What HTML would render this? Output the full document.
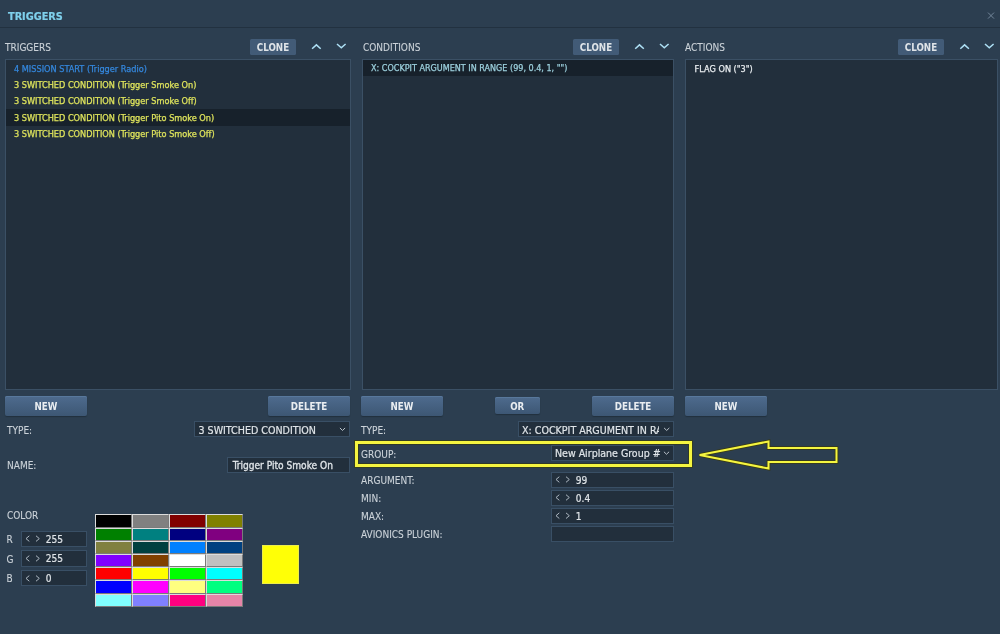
<!DOCTYPE html>
<html><head><meta charset="utf-8"><title>Triggers</title>
<style>
html,body{margin:0;padding:0;}
html{background:#2c3e50;}
body{width:1000px;height:634px;overflow:hidden;position:relative;will-change:transform;
 font-family:"DejaVu Sans Condensed","DejaVu Sans","Liberation Sans",sans-serif;font-stretch:condensed;font-size:10px;color:#d5dbe0;-webkit-text-stroke:0.2px;}
.a{position:absolute;white-space:nowrap;}
.title{left:8px;top:8.7px;font-weight:bold;font-size:10.8px;color:#7fd0ec;line-height:16px;}
.sep{left:0;top:27px;width:1000px;height:1px;background:#223140;}
.lbl{-webkit-text-stroke:0.1px;font-size:10px;line-height:14px;color:#ccd3d9;}
.list{background:#222f3c;border:1px solid #3b5065;box-sizing:border-box;}
.btn{color:#e9edf1;font-weight:bold;font-size:9.7px;text-align:center;box-sizing:border-box;border-radius:2px;background:linear-gradient(#4e6b8e,#3d5774);box-shadow:inset 0 1px 0 #58789c,0 1px 1px rgba(20,30,40,0.45);-webkit-text-stroke:0;}
.clone{height:16.5px;line-height:17.5px;width:46px;top:38.5px;font-size:9.7px;background:#425b77;box-shadow:none;border-radius:1.5px;color:#dfe4e8;}
.big{height:19.5px;line-height:21px;top:396px;width:82px;}
.row{font-size:9.1px;-webkit-text-stroke:0.25px;line-height:16px;height:16px;}
.inp{background:#222f3c;border:1px solid #394f65;box-sizing:border-box;}
.val{font-size:10.6px;line-height:14px;color:#dfe4e8;}
.cell{box-sizing:border-box;border-left:1px solid #dcdcdc;border-top:1px solid #dcdcdc;border-right:1px solid #7a7a7a;border-bottom:1px solid #7a7a7a;}
</style></head><body>
<div class="a title">TRIGGERS</div>
<div class="a sep"></div>


<div class="a lbl" style="left:5px;top:41px;">TRIGGERS</div>
<div class="a lbl" style="left:363px;top:41px;">CONDITIONS</div>
<div class="a lbl" style="left:685px;top:41px;">ACTIONS</div>

<div class="a btn clone" style="left:250px;">CLONE</div>
<div class="a btn clone" style="left:573px;">CLONE</div>
<div class="a btn clone" style="left:898px;">CLONE</div>


<div class="a list" style="left:5px;top:59px;width:345.5px;height:331.4px;"></div>
<div class="a list" style="left:362.4px;top:59px;width:311.6px;height:331.4px;"></div>
<div class="a list" style="left:685.2px;top:59px;width:312.5px;height:331.4px;"></div>

<div class="a row" style="left:14px;top:61px;color:#3487dd;">4 MISSION START (Trigger Radio)</div>
<div class="a row" style="left:14px;top:77px;color:#dfe45c;">3 SWITCHED CONDITION (Trigger Smoke On)</div>
<div class="a row" style="left:14px;top:93px;color:#dfe45c;">3 SWITCHED CONDITION (Trigger Smoke Off)</div>
<div class="a" style="left:6px;top:109px;width:343.5px;height:17px;background:#17212b;"></div>
<div class="a row" style="left:14px;top:110px;color:#dfe45c;">3 SWITCHED CONDITION (Trigger Pito Smoke On)</div>
<div class="a row" style="left:14px;top:126px;color:#dfe45c;">3 SWITCHED CONDITION (Trigger Pito Smoke Off)</div>

<div class="a" style="left:363px;top:60px;width:310px;height:16px;background:#17212b;"></div>
<div class="a row" style="left:371px;top:60px;font-size:8.97px;color:#9bcfdc;">X: COCKPIT ARGUMENT IN RANGE (99, 0.4, 1, "")</div>
<div class="a row" style="left:694.6px;top:61px;color:#e8ecef;">FLAG ON ("3")</div>

<div class="a btn big" style="left:5px;">NEW</div>
<div class="a btn big" style="left:268px;">DELETE</div>
<div class="a btn big" style="left:361px;">NEW</div>
<div class="a btn big" style="left:494.5px;width:45.5px;top:397.3px;height:16.5px;line-height:20px;">OR</div>
<div class="a btn big" style="left:592px;">DELETE</div>
<div class="a btn big" style="left:685px;">NEW</div>

<div class="a lbl" style="left:7px;top:424px;">TYPE:</div>
<div class="a inp" style="left:194px;top:421.3px;width:156px;height:16px;"></div>
<div class="a val" style="left:198.5px;top:422.5px;">3 SWITCHED CONDITION</div>

<div class="a lbl" style="left:7px;top:459px;">NAME:</div>
<div class="a inp" style="left:227px;top:457px;width:123px;height:16px;"></div>
<div class="a val" style="left:232.7px;top:459px;font-size:10.1px;-webkit-text-stroke:0.3px;">Trigger Pito Smoke On</div>

<div class="a lbl" style="left:7px;top:509px;">COLOR</div>
<div class="a lbl" style="left:6.5px;top:533px;">R</div>
<div class="a lbl" style="left:6.5px;top:552.5px;">G</div>
<div class="a lbl" style="left:6.5px;top:572px;">B</div>
<div class="a inp" style="left:21px;top:530.5px;width:66px;height:16.2px;"></div>
<div class="a val" style="left:45.8px;top:532.6px;font-size:10.1px;">255</div>
<div class="a inp" style="left:21px;top:550.3px;width:66px;height:16.3px;"></div>
<div class="a val" style="left:45.8px;top:552.4499999999999px;font-size:10.1px;">255</div>
<div class="a inp" style="left:21px;top:570.3px;width:66px;height:16.2px;"></div>
<div class="a val" style="left:45.8px;top:572.4px;font-size:10.1px;">0</div>

<div class="a cell" style="left:94.80px;top:514.40px;width:37.15px;height:13.19px;background:#000000;"></div>
<div class="a cell" style="left:131.95px;top:514.40px;width:37.15px;height:13.19px;background:#808080;"></div>
<div class="a cell" style="left:169.10px;top:514.40px;width:37.15px;height:13.19px;background:#800000;"></div>
<div class="a cell" style="left:206.25px;top:514.40px;width:37.15px;height:13.19px;background:#808000;"></div>
<div class="a cell" style="left:94.80px;top:527.59px;width:37.15px;height:13.19px;background:#008000;"></div>
<div class="a cell" style="left:131.95px;top:527.59px;width:37.15px;height:13.19px;background:#008080;"></div>
<div class="a cell" style="left:169.10px;top:527.59px;width:37.15px;height:13.19px;background:#000080;"></div>
<div class="a cell" style="left:206.25px;top:527.59px;width:37.15px;height:13.19px;background:#800080;"></div>
<div class="a cell" style="left:94.80px;top:540.77px;width:37.15px;height:13.19px;background:#808040;"></div>
<div class="a cell" style="left:131.95px;top:540.77px;width:37.15px;height:13.19px;background:#004040;"></div>
<div class="a cell" style="left:169.10px;top:540.77px;width:37.15px;height:13.19px;background:#0080ff;"></div>
<div class="a cell" style="left:206.25px;top:540.77px;width:37.15px;height:13.19px;background:#004080;"></div>
<div class="a cell" style="left:94.80px;top:553.96px;width:37.15px;height:13.19px;background:#8000ff;"></div>
<div class="a cell" style="left:131.95px;top:553.96px;width:37.15px;height:13.19px;background:#804000;"></div>
<div class="a cell" style="left:169.10px;top:553.96px;width:37.15px;height:13.19px;background:#ffffff;"></div>
<div class="a cell" style="left:206.25px;top:553.96px;width:37.15px;height:13.19px;background:#c0c0c0;"></div>
<div class="a cell" style="left:94.80px;top:567.14px;width:37.15px;height:13.19px;background:#ff0000;"></div>
<div class="a cell" style="left:131.95px;top:567.14px;width:37.15px;height:13.19px;background:#ffff00;"></div>
<div class="a cell" style="left:169.10px;top:567.14px;width:37.15px;height:13.19px;background:#00ff00;"></div>
<div class="a cell" style="left:206.25px;top:567.14px;width:37.15px;height:13.19px;background:#00ffff;"></div>
<div class="a cell" style="left:94.80px;top:580.33px;width:37.15px;height:13.19px;background:#0000ff;"></div>
<div class="a cell" style="left:131.95px;top:580.33px;width:37.15px;height:13.19px;background:#ff00ff;"></div>
<div class="a cell" style="left:169.10px;top:580.33px;width:37.15px;height:13.19px;background:#ffff80;"></div>
<div class="a cell" style="left:206.25px;top:580.33px;width:37.15px;height:13.19px;background:#00ff80;"></div>
<div class="a cell" style="left:94.80px;top:593.51px;width:37.15px;height:13.19px;background:#80ffff;"></div>
<div class="a cell" style="left:131.95px;top:593.51px;width:37.15px;height:13.19px;background:#8080ff;"></div>
<div class="a cell" style="left:169.10px;top:593.51px;width:37.15px;height:13.19px;background:#ff0080;"></div>
<div class="a cell" style="left:206.25px;top:593.51px;width:37.15px;height:13.19px;background:#e684a8;"></div>

<div class="a" style="left:262.3px;top:545px;width:37px;height:39px;background:#ffff06;box-sizing:border-box;border:1px solid #eded4a;"></div>

<div class="a lbl" style="left:361px;top:424px;">TYPE:</div>
<div class="a inp" style="left:518px;top:421.3px;width:156px;height:16px;"></div>
<div class="a val" style="left:522px;top:422.5px;width:137px;overflow:hidden;">X: COCKPIT ARGUMENT IN RA</div>

<div class="a lbl" style="left:361px;top:448px;">GROUP:</div>
<div class="a inp" style="left:551px;top:445px;width:123px;height:16px;"></div>
<div class="a val" style="left:555px;top:446px;width:106px;overflow:hidden;font-size:10.52px;">New Airplane Group #</div>

<div class="a" style="left:355px;top:441px;width:337px;height:26.4px;box-sizing:border-box;border:3px solid #f5f540;outline:1px solid rgba(60,60,0,0.55);box-shadow:inset 0 0 0 1px rgba(50,50,0,0.5);"></div>


<div class="a lbl" style="left:361px;top:474px;">ARGUMENT:</div>
<div class="a lbl" style="left:361px;top:492px;">MIN:</div>
<div class="a lbl" style="left:361px;top:510px;">MAX:</div>
<div class="a lbl" style="left:361px;top:528px;">AVIONICS PLUGIN:</div>
<div class="a inp" style="left:551px;top:471.5px;width:123px;height:16px;"></div>
<div class="a val" style="left:575.8px;top:473.5px;font-size:10.1px;">99</div>
<div class="a inp" style="left:551px;top:489.5px;width:123px;height:16px;"></div>
<div class="a val" style="left:575.8px;top:491.5px;font-size:10.1px;">0.4</div>
<div class="a inp" style="left:551px;top:507.7px;width:123px;height:16px;"></div>
<div class="a val" style="left:575.8px;top:509.70000000000005px;font-size:10.1px;">1</div>

<div class="a inp" style="left:551px;top:525.7px;width:123px;height:16px;"></div>
<svg class="a" style="left:0;top:0" width="1000" height="634" viewBox="0 0 1000 634" fill="none">
<path d="M312.10 48.75 L316.40 44.85 L320.70 48.75" stroke="#aee0f5" stroke-width="1.5"/>
<path d="M337.00 43.95 L341.30 47.85 L345.60 43.95" stroke="#aee0f5" stroke-width="1.5"/>
<path d="M635.20 48.75 L639.50 44.85 L643.80 48.75" stroke="#aee0f5" stroke-width="1.5"/>
<path d="M660.00 43.95 L664.30 47.85 L668.60 43.95" stroke="#aee0f5" stroke-width="1.5"/>
<path d="M960.30 48.75 L964.60 44.85 L968.90 48.75" stroke="#aee0f5" stroke-width="1.5"/>
<path d="M985.00 43.95 L989.30 47.85 L993.60 43.95" stroke="#aee0f5" stroke-width="1.5"/>
<path d="M339.90 427.95 L342.50 430.45 L345.10 427.95" stroke="#bcc4cc" stroke-width="1"/>
<path d="M29.30 535.80 L26.00 538.60 L29.30 541.40 M36.00 535.80 L39.30 538.60 L36.00 541.40" stroke="#aeb8c2" stroke-width="1"/>
<path d="M29.30 555.65 L26.00 558.45 L29.30 561.25 M36.00 555.65 L39.30 558.45 L36.00 561.25" stroke="#aeb8c2" stroke-width="1"/>
<path d="M29.30 575.60 L26.00 578.40 L29.30 581.20 M36.00 575.60 L39.30 578.40 L36.00 581.20" stroke="#aeb8c2" stroke-width="1"/>
<path d="M664.10 427.95 L666.70 430.45 L669.30 427.95" stroke="#bcc4cc" stroke-width="1"/>
<path d="M663.90 451.75 L666.50 454.25 L669.10 451.75" stroke="#bcc4cc" stroke-width="1"/>
<path d="M559.30 476.70 L556.00 479.50 L559.30 482.30 M566.00 476.70 L569.30 479.50 L566.00 482.30" stroke="#aeb8c2" stroke-width="1"/>
<path d="M559.30 494.70 L556.00 497.50 L559.30 500.30 M566.00 494.70 L569.30 497.50 L566.00 500.30" stroke="#aeb8c2" stroke-width="1"/>
<path d="M559.30 512.90 L556.00 515.70 L559.30 518.50 M566.00 512.90 L569.30 515.70 L566.00 518.50" stroke="#aeb8c2" stroke-width="1"/>
<path d="M988 12.6 L994 18.6 M994 12.6 L988 18.6" stroke="#73869a" stroke-width="1"/>
<path d="M699.6 455 L768.5 441.5 L768.5 448 L836.5 448 L836.5 462 L768.5 462 L768.5 468.5 Z" stroke="#3a3a10" stroke-width="3.6" stroke-linejoin="miter"/>
<path d="M699.6 455 L768.5 441.5 L768.5 448 L836.5 448 L836.5 462 L768.5 462 L768.5 468.5 Z" stroke="#f5f540" stroke-width="2" stroke-linejoin="miter"/>
</svg>
</body></html>
